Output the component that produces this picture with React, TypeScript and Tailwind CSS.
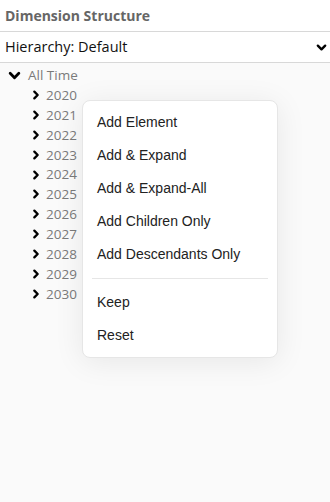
const years = ['2020', '2021', '2022', '2023', '2024', '2025', '2026', '2027', '2028', '2029', '2030'];

function ChevronDown({ className }: { className?: string }) {
  return (
    <svg viewBox="0 0 12 12" className={className} fill="none" stroke="currentColor" strokeWidth="2.6" strokeLinecap="round" strokeLinejoin="round">
      <path d="M2 4l4 4 4-4" />
    </svg>
  );
}

function ChevronRight({ className }: { className?: string }) {
  return (
    <svg viewBox="0 0 12 12" className={className} fill="none" stroke="currentColor" strokeWidth="2.8" strokeLinecap="round" strokeLinejoin="round">
      <path d="M4 2l4 4-4 4" />
    </svg>
  );
}

function MenuItem({ label }: { label: string }) {
  return <div className="h-[33px] flex items-center px-[14px] text-[14px] text-[#222]">{label}</div>;
}

export default function App() {
  return (
    <div className="w-[330px] h-[502px] bg-[#fafafa] flex flex-col relative overflow-hidden" style={{ fontFamily: '"Open Sans", "Noto Sans", sans-serif' }}>
      <div className="h-[32px] bg-white border-b border-[#d8d8d8] flex items-center px-[5px] text-[14px] font-bold text-[#666]">
        Dimension Structure
      </div>
      <div className="h-[31px] bg-white border-b border-[#d8d8d8] flex items-center justify-between pl-[5px] pr-[3px] text-[14.5px] text-[#111]">
        <span>Hierarchy: Default</span>
        <ChevronDown className="w-[11px] h-[11px] text-black" />
      </div>
      <div className="pt-[2px] text-[13.5px] text-[#7a7a7a]">
        <div className="h-[20px] flex items-center pl-[8px] gap-[7px]">
          <ChevronDown className="w-[13px] h-[13px] text-black" />
          <span>All Time</span>
        </div>
        {years.map((y) => (
          <div key={y} className="h-[19.9px] flex items-center pl-[31px] gap-[5px]">
            <ChevronRight className="w-[10px] h-[12px] text-black" />
            <span>{y}</span>
          </div>
        ))}
      </div>
      <div
        className="absolute left-[82px] top-[100px] w-[196px] bg-white border border-[#e6e6e6] rounded-[8px] shadow-[0_4px_30px_rgba(0,0,0,0.08)] py-[5px]"
        style={{ fontFamily: '"Liberation Sans", Arial, sans-serif' }}
      >
        <MenuItem label="Add Element" />
        <MenuItem label="Add & Expand" />
        <MenuItem label="Add & Expand-All" />
        <MenuItem label="Add Children Only" />
        <MenuItem label="Add Descendants Only" />
        <div className="mx-[9px] my-[7px] border-t border-[#e6e6e6]" />
        <MenuItem label="Keep" />
        <MenuItem label="Reset" />
      </div>
    </div>
  );
}
